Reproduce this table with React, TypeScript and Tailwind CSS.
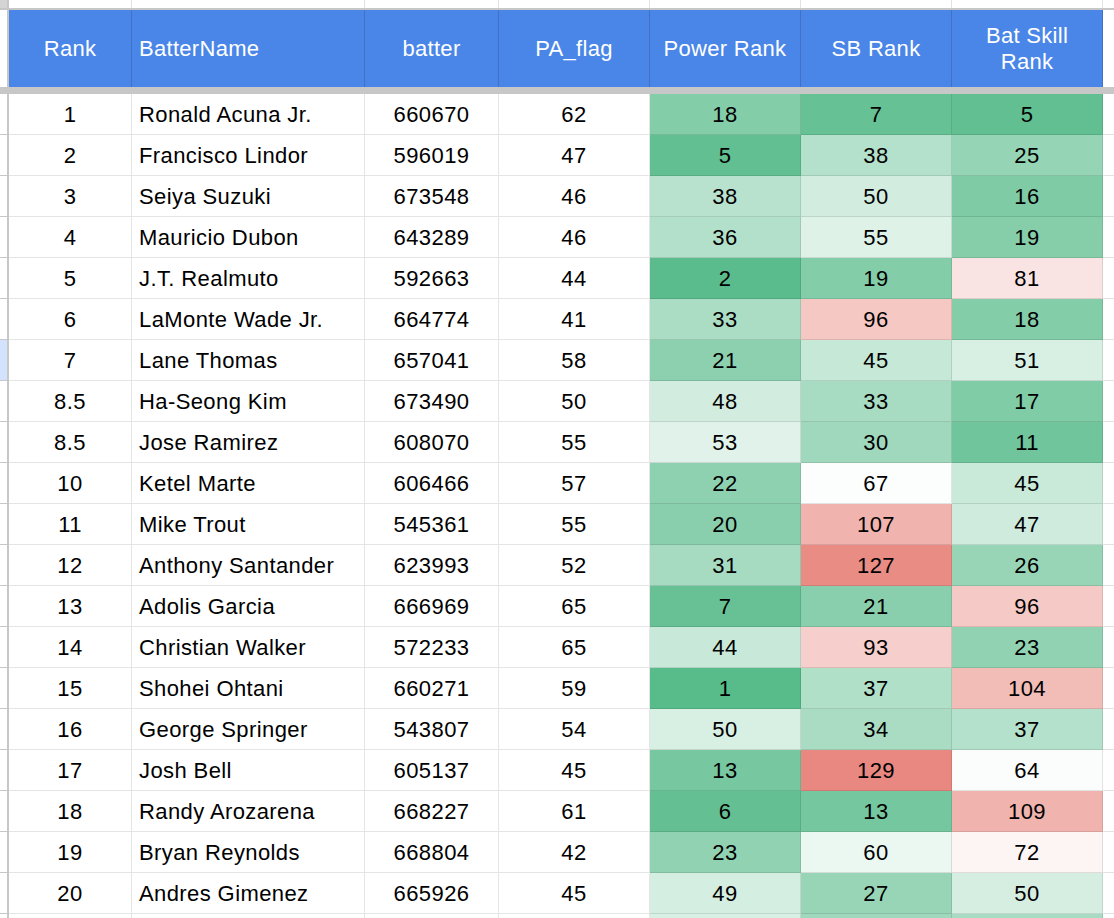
const rows: [string, string, string, string, number, number, number][] = [
  ["1", "Ronald Acuna Jr.", "660670", "62", 18, 7, 5],
  ["2", "Francisco Lindor", "596019", "47", 5, 38, 25],
  ["3", "Seiya Suzuki", "673548", "46", 38, 50, 16],
  ["4", "Mauricio Dubon", "643289", "46", 36, 55, 19],
  ["5", "J.T. Realmuto", "592663", "44", 2, 19, 81],
  ["6", "LaMonte Wade Jr.", "664774", "41", 33, 96, 18],
  ["7", "Lane Thomas", "657041", "58", 21, 45, 51],
  ["8.5", "Ha-Seong Kim", "673490", "50", 48, 33, 17],
  ["8.5", "Jose Ramirez", "608070", "55", 53, 30, 11],
  ["10", "Ketel Marte", "606466", "57", 22, 67, 45],
  ["11", "Mike Trout", "545361", "55", 20, 107, 47],
  ["12", "Anthony Santander", "623993", "52", 31, 127, 26],
  ["13", "Adolis Garcia", "666969", "65", 7, 21, 96],
  ["14", "Christian Walker", "572233", "65", 44, 93, 23],
  ["15", "Shohei Ohtani", "660271", "59", 1, 37, 104],
  ["16", "George Springer", "543807", "54", 50, 34, 37],
  ["17", "Josh Bell", "605137", "45", 13, 129, 64],
  ["18", "Randy Arozarena", "668227", "61", 6, 13, 109],
  ["19", "Bryan Reynolds", "668804", "42", 23, 60, 72],
  ["20", "Andres Gimenez", "665926", "45", 49, 27, 50],
  ["", "", "", "", 50, 30, 32],
];

// green - white - red scale, like the sheet's conditional format
const scales = [
  { min: 1, mid: 65, max: 130 },
  { min: 1, mid: 68, max: 135 },
  { min: 1, mid: 66, max: 140 },
];

function scaleColor(v: number, col: number) {
  const { min, mid, max } = scales[col];
  const green = [87, 187, 138];
  const red = [230, 124, 115];
  let t: number;
  let target: number[];
  if (v <= mid) {
    t = Math.min(1, (mid - v) / (mid - min));
    target = green;
  } else {
    t = Math.min(1, (v - mid) / (max - mid));
    target = red;
  }
  const c = target.map((x) => Math.round(255 + (x - 255) * t));
  return `rgb(${c[0]}, ${c[1]}, ${c[2]})`;
}

const widths = ["w-[123px]", "w-[233px]", "w-[134px]", "w-[151px]", "w-[151px]", "w-[151px]", "w-[151px]"];

export default function App() {
  return (
    <div className="w-[1114px] h-[918px] overflow-hidden bg-white text-black font-['Liberation_Sans',Arial,sans-serif]">
      {/* top strip of the row above */}
      <div className="flex h-[8px]">
        <div className="w-[7px] shrink-0 bg-[#d4d4d4]" />
        <div className="w-[2px] shrink-0 bg-[#c7c7c7]" />
        {widths.map((w, i) => (
          <div key={i} className={`${w} shrink-0 border-r border-[#e2e2e2]`} />
        ))}
        <div className="flex-1" />
      </div>
      <div className="h-[2px] bg-[#c7c7c7]" />

      {/* header */}
      <div className="flex h-[77px] text-white text-[22px] tracking-[0.3px]">
        <div className="w-[7px] shrink-0 bg-white" />
        <div className="w-[2px] shrink-0 bg-[#c7c7c7]" />
        <div className="w-[123px] shrink-0 bg-[#4a86e8] border-r border-black/15 flex items-center justify-center">
          Rank
        </div>
        <div className="w-[233px] shrink-0 bg-[#4a86e8] border-r border-black/15 flex items-center pl-[7px]">
          BatterName
        </div>
        <div className="w-[134px] shrink-0 bg-[#4a86e8] border-r border-black/15 flex items-center justify-center">
          batter
        </div>
        <div className="w-[151px] shrink-0 bg-[#4a86e8] border-r border-black/15 flex items-center justify-center">
          PA_flag
        </div>
        <div className="w-[151px] shrink-0 bg-[#4a86e8] border-r border-black/15 flex items-center justify-center whitespace-nowrap">
          Power Rank
        </div>
        <div className="w-[151px] shrink-0 bg-[#4a86e8] border-r border-black/15 flex items-center justify-center">
          SB Rank
        </div>
        <div className="w-[151px] shrink-0 bg-[#4a86e8] border-r border-black/15 flex items-center justify-center text-center leading-[26px] px-8">
          Bat Skill Rank
        </div>
        <div className="flex-1 bg-white" />
      </div>
      <div className="h-[7px] bg-[#c7c7c7]" />

      {/* body rows */}
      {rows.map((r, i) => (
        <div key={i} className="flex h-[41px] text-[22px] tracking-[0.4px]">
          <div
            className={`w-[7px] shrink-0 border-b border-[#c7c7c7] ${i === 6 ? "bg-[#d3e3fd]" : "bg-white"}`}
          />
          <div className="w-[2px] shrink-0 bg-[#c7c7c7]" />
          <div className="w-[123px] shrink-0 border-r border-b border-black/10 flex items-center justify-center">
            {r[0]}
          </div>
          <div className="w-[233px] shrink-0 border-r border-b border-black/10 flex items-center pl-[7px] whitespace-nowrap">
            {r[1]}
          </div>
          <div className="w-[134px] shrink-0 border-r border-b border-black/10 flex items-center justify-center">
            {r[2]}
          </div>
          <div className="w-[151px] shrink-0 border-r border-b border-black/10 flex items-center justify-center">
            {r[3]}
          </div>
          {[r[4], r[5], r[6]].map((v, j) => (
            <div
              key={j}
              className="w-[151px] shrink-0 border-r border-b border-black/10 flex items-center justify-center"
              style={{ backgroundColor: scaleColor(v, j) }}
            >
              {r[0] ? v : ""}
            </div>
          ))}
          <div className="flex-1 border-b border-[#e2e2e2]" />
        </div>
      ))}
    </div>
  );
}
